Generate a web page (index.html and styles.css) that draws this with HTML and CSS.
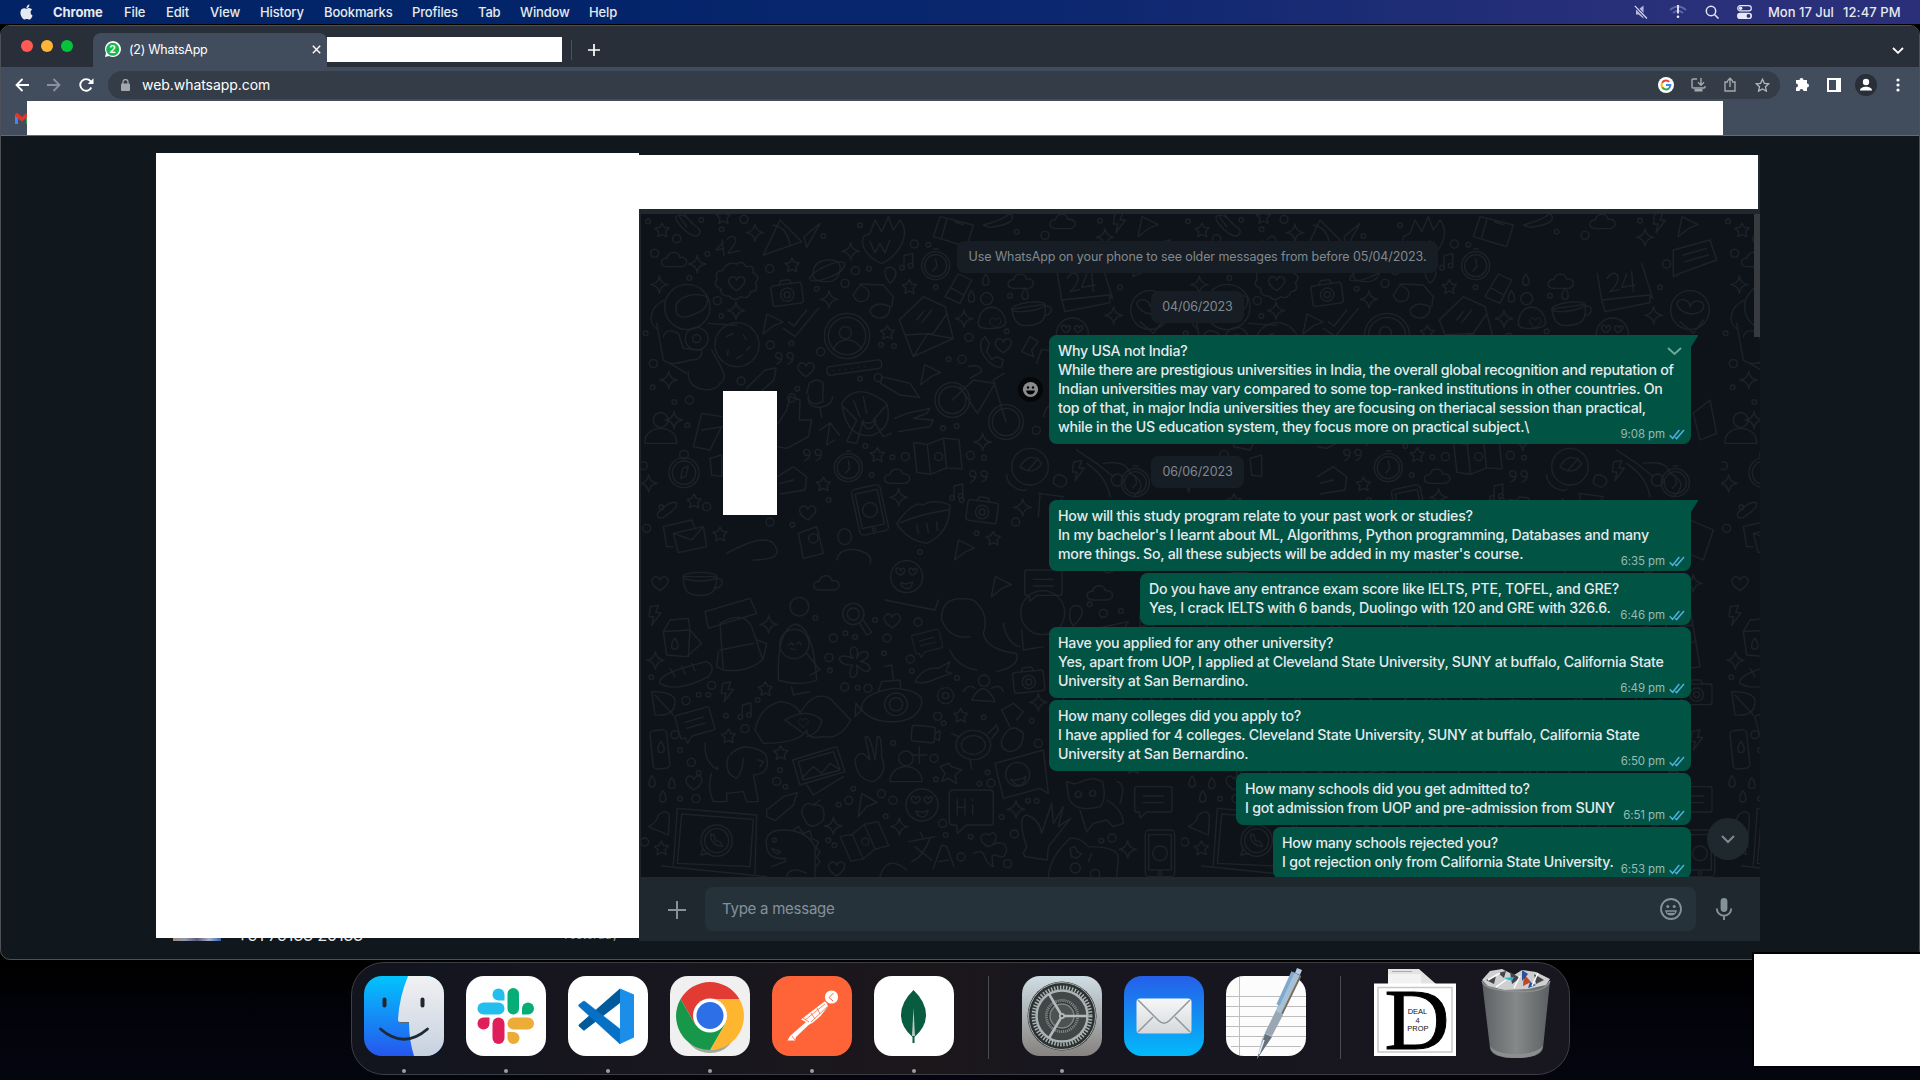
FILE: index.html
```html
<!DOCTYPE html>
<html lang="en">
<head>
<meta charset="utf-8">
<title>(2) WhatsApp</title>
<link rel="stylesheet" href="styles.css">
</head>
<body>
<svg class="defs" width="0" height="0">
  <defs>
    <symbol id="ticks" viewBox="0 0 16 11"><path d="M.7 6.200 3.600 9.300 10.300 1M6.200 8.200 7.600 9.600 15 1" fill="none" stroke="#4cb0dc" stroke-width="1.500"/></symbol>
    <g id="o"><circle r="7"/></g>
    <g id="O"><circle r="12"/></g>
    <g id="star"><path d="M0-21 7-8 21-6 11 5 14 20 0 13-13 20-10 5-21-5-7-8Z"/></g>
    <g id="spark"><path d="M0-26Q3-3 26 0 3 3 0 26-3 3-26 0-3-3 0-26Z"/></g>
    <g id="heart"><path d="M0 22C-22 8-30-6-20-16-12-24-2-18 0-10 4-20 14-24 21-16 30-6 20 8 0 22Z"/></g>
    <g id="cloud"><path d="M-22 20C-46 18-42-8-22-6-18-28 14-28 16-8 42-10 44 16 22 20Z"/></g>
    <g id="bolt"><path d="M-14-26 10-30 2-8 18-8-10 30-4 4-18 4Z"/></g>
    <g id="camera"><rect x="-46" y="-28" width="92" height="62" rx="8"/><path d="M-20-28-14-40 12-40 18-28"/><circle r="20" cy="4"/><circle r="9" cy="4"/></g>
    <g id="clock"><circle r="42"/><circle r="33"/><path d="M0-20 4 2-8 16M-6-50H8"/></g>
    <g id="drop"><path d="M0-18C16 4 10 16 0 16S-14 4 0-18Z"/></g>
    <g id="note"><path d="M-8 18V-18L18-24V12"/><circle cx="-14" cy="18" r="7"/><circle cx="12" cy="12" r="7"/></g>
    <g id="quote"><path d="M-26 14C-6 6-6-20-20-20S-32 0-14-2M8 14C28 6 28-20 14-20S2 0 20-2"/></g>
    <g id="chat"><path d="M-56-34Q-56-40-50-40H50Q56-40 56-34V30Q56 36 50 36H-20L-40 54-42 36H-50Q-56 36-56 30Z"/><path d="M-30-12H30M-30 8H30"/></g>
    <g id="map"><path d="M-70-50-30-40 20-54 66-44V44L20 36-30 50-70 40ZM-30-40V50M20-54V36"/><circle r="12"/></g>
    <g id="phone"><rect x="-44" y="-70" width="88" height="140" rx="12"/><rect x="-34" y="-56" width="68" height="106"/><circle r="22"/><circle cy="60" r="5"/></g>
    <g id="smile"><circle r="48"/><path d="M-26-8C-44-24-20-34-18-18-12-34 6-20-18-4ZM16-4C-4-20 14-34 20-18 26-34 44-18 16-4ZM-18 18Q0 26 18 16 14 38 0 36-14 34-18 18Z"/></g>
    <g id="person"><circle cy="-40" r="22"/><path d="M-48 30C-48-30 48-30 48 30Z"/></g>
    <g id="cup"><path d="M-50-20C-50 30-30 36 0 36S50 30 50-20Z"/><ellipse cy="-20" rx="50" ry="13"/><path d="M50-14C76-18 70 16 44 14"/></g>
    <g id="plane"><path d="M-26 30-14-30 34-6 8 4Z"/></g>
    <pattern id="doodles" width="540" height="663" patternUnits="userSpaceOnUse">
      <g transform="scale(.33333) translate(-3 -42)" fill="none" stroke="#1c2228" stroke-width="4" stroke-linejoin="round" stroke-linecap="round">
        <path d="M110 62C100 40 130 40 150 62S190 90 176 104 130 92 110 62ZM118 50 140 80M134 44 158 72"/>
        <path d="M250 125 228 150 252 146M246 120 252 166M262 118C280 96 300 120 276 142L264 160 300 152"/>
        <path d="M370 165 420 60 485 125Q430 145 370 165ZM400 75Q440 80 450 135M492 110 540 70 500 142Z"/>
        <path d="M670 110C655 160 720 190 725 190 760 180 820 110 780 60L760 90 745 50 725 95 705 60 690 100ZM690 125 705 158 720 130 735 158 750 120"/>
        <path d="M900 50 1000 75 980 140 880 110ZM920 60 905 112M945 66 970 74M1030 75Q1090 60 1110 40 1140 70 1050 82Z"/>
        <use href="#cloud" x="103" y="180"/><use href="#cloud" x="1268" y="66"/><use href="#cloud" x="1143" y="245"/><use href="#cloud" x="772" y="830"/>
        <use href="#star" x="66" y="90"/><use href="#star" x="456" y="195"/><use href="#star" x="742" y="397"/><use href="#star" x="808" y="260"/><use href="#star" x="712" y="764"/><use href="#star" x="550" y="852"/><use href="#star" x="162" y="903"/><use href="#star" x="240" y="1002"/><use href="#star" x="1060" y="1015"/><use href="#star" x="250" y="50"/>
        <use href="#spark" x="172" y="192"/><use href="#spark" x="58" y="254"/><use href="#spark" x="345" y="98"/><use href="#spark" x="632" y="154"/><use href="#spark" x="567" y="298"/><use href="#spark" x="288" y="332"/><use href="#spark" x="972" y="356"/><use href="#spark" x="86" y="540"/><use href="#spark" x="1028" y="726"/><use href="#spark" x="776" y="892"/><use href="#spark" x="1148" y="922"/><use href="#spark" x="26" y="850"/><use href="#spark" x="1421" y="346"/><use href="#spark" x="1395" y="112"/><use href="#spark" x="102" y="660"/>
        <path d="M290 192Q310 180 318 200 345 195 338 218 365 230 346 248 358 275 332 275 325 300 302 290 282 308 268 288 240 290 243 266 215 255 232 238 222 212 248 212 262 182 290 192Z"/><use href="#heart" x="290" y="250"/>
        <path d="M520 230Q515 185 560 180T600 210 560 245 520 230ZM510 240C500 215 620 165 614 195S530 250 510 240Z"/>
        <use href="#camera" transform="translate(441 280) rotate(-8)"/><use href="#camera" transform="translate(1027 932) rotate(8)"/>
        <circle cx="142" cy="321" r="68"/><path d="M110 340C95 290 160 275 200 290Q215 330 142 350 120 355 110 340ZM75 300C25 320 25 370 50 385M50 370 70 480Q90 500 150 480 190 480 185 450L130 445 115 400Q80 380 70 410M205 370 290 376M215 450C240 500 270 530 240 550 230 580 140 580 145 515M90 490 140 520"/><circle cx="170" cy="416" r="34"/><circle cx="170" cy="416" r="12"/>
        <circle cx="291" cy="434" r="66" stroke-dasharray="24 5"/><path d="M260 410 280 400M310 405 318 418M265 450 262 465M320 450 330 440M290 475 308 465"/>
        <use href="#plane" x="395" y="372"/><use href="#plane" x="868" y="524"/><path d="M430 385 465 410 535 325M445 365 462 378 500 330"/>
        <circle cx="621" cy="408" r="68"/><circle cx="621" cy="408" r="56"/><circle cx="616" cy="398" r="18"/><path d="M580 450C590 410 650 410 664 448"/>
        <path d="M640 285 660 255Q700 270 680 300 650 315 640 285ZM690 330Q710 300 750 320 750 350 720 355 690 350 690 330ZM660 252 730 255 760 290 755 320"/>
        <path d="M778 360 850 290 915 320 940 415 820 470ZM795 405 880 400 918 345M820 470 862 402 940 415M830 360 850 335M845 368 875 330"/>
        <use href="#clock" x="887" y="197"/><use href="#clock" x="625" y="803"/><use href="#note" x="800" y="185"/><use href="#note" x="950" y="876"/>
        <path d="M750 250C720 210 740 200 752 202 778 210 768 235 750 250ZM915 290 955 222 995 240 960 310ZM930 262 972 285"/>
        <use href="#drop" x="994" y="290"/><use href="#drop" x="1037" y="240"/><use href="#drop" x="1155" y="282"/><circle cx="1040" cy="296" r="18"/>
        <use href="#smile" x="1297" y="402"/><path d="M1015 375C1015 300 1095 310 1097 370 1090 390 1020 390 1015 375Z"/><use href="#heart" transform="translate(1066 368) scale(.7)"/>
        <use href="#cup" transform="translate(1168 340) rotate(-8)"/>
        <path d="M1252 220 1265 300 1408 285 1418 295 1385 190M1275 335 1410 308V290M1265 300 1275 335M1282 235C1300 200 1340 230 1290 275L1320 268M1340 222 1325 262 1365 255M1355 215 1360 275"/>
        <circle cx="1530" cy="330" r="58"/><path d="M1490 310C1500 290 1530 300 1530 320 1540 295 1570 300 1572 320 1565 350 1500 350 1490 310ZM1500 365 1540 400 1570 360"/><path d="M1480 150 1590 120 1610 180 1500 220 1480 230Z M1510 165 1580 145M1515 185 1585 165"/><use href="#plane" x="1520" y="80"/><use href="#bolt" x="1438" y="68"/>
        <use href="#quote" x="436" y="478"/><use href="#quote" x="520" y="768"/><use href="#quote" x="1018" y="832"/><use href="#heart" x="498" y="508"/><use href="#heart" x="1090" y="436"/><use href="#heart" x="503" y="938"/>
        <rect x="560" y="490" width="165" height="26" rx="10" transform="rotate(-8 640 500)"/><path d="M580 512 690 498" stroke-dasharray="1 18"/>
        <path d="M1025 420C1010 460 1060 510 1085 500L1090 480 1070 470 1055 478 1040 455 1048 430 1035 410ZM1145 455 1170 410 1195 425 1175 450 1180 470ZM1190 490 1205 448 1230 452"/>
        <path d="M320 565 375 510 408 504 402 540 345 590M725 530 810 550 838 592 780 585 722 550ZM500 580 508 550Q530 530 550 550L548 605Q520 620 508 600M505 585Q500 620 535 622 575 620 578 590M540 622 545 652"/>
        <circle cx="937" cy="600" r="52"/><circle cx="937" cy="600" r="41"/><circle cx="1098" cy="666" r="52"/><circle cx="1098" cy="666" r="41"/><path d="M937 600 1000 540 1065 550 1012 640 960 560M1098 666 1060 540 1092 520M985 500Q1020 490 1025 515L990 535"/>
        <path d="M605 610Q650 540 740 610 760 680 700 705 620 720 605 610ZM610 620 650 660 620 725 650 730 670 660M740 615 700 660 730 710 755 700M640 600 660 650M670 590 680 640M665 665Q690 675 708 660 700 690 680 685Z"/>
        <path d="M765 655 800 640 870 625 860 640 820 655 880 660 870 680 775 695M415 670 440 630 450 590 480 600 478 660 515 660 505 710 440 745 412 740M540 690 570 668 598 705M570 668 560 735 585 720"/>
        <use href="#person" x="62" y="700"/><path d="M160 740 185 640 245 650M185 690 250 680M160 740 210 750 245 680"/>
        <circle cx="132" cy="818" r="45"/><circle cx="132" cy="818" r="35"/><circle cx="132" cy="764" r="13"/><path d="M122 835 128 805 145 798 138 828Z"/>
        <use href="#map" transform="translate(896 770) rotate(-6)"/><circle cx="1170" cy="800" r="55"/><path d="M1100 825C1100 860 1150 880 1160 868M1140 800Q1170 750 1205 790 1180 830 1140 800ZM1165 810 1195 775"/>
        <path d="M1310 750 1370 790 1420 830M1390 790Q1460 780 1470 820 1530 850 1480 890M1340 790Q1400 830 1410 890"/><circle cx="1432" cy="840" r="18"/><use href="#bolt" x="1315" y="812"/><path d="M1240 850Q1240 820 1262 825 1290 835 1275 855 1265 870 1240 850ZM1195 880 1270 890M1200 885 1195 950M1265 895 1262 920"/><use href="#clock" x="1486" y="848"/>
        <path d="M412 830 460 800 500 830 495 870 420 882M420 850 460 840M210 775 245 765 245 830 215 825ZM52 940Q90 900 108 908 120 920 70 952 50 960 52 940Z"/>
        <use href="#phone" transform="translate(690 930) rotate(-12)"/><path d="M770 970Q820 900 850 915 880 895 930 915 930 1000 860 1030 800 1020 770 970ZM780 968Q850 940 925 930M830 975 835 1000M860 970 865 998M890 965 892 992"/>
        <path d="M70 980 155 960 165 985M70 980 80 1040 100 1040M100 1000 190 980 200 1040 115 1058ZM100 1000 155 1020 190 980M475 1000 530 980 550 1060 490 1075ZM590 1080Q600 1040 650 1050 700 1060 690 1090M260 1060Q370 1000 400 1030 440 1080 340 1080"/>
        <circle cx="520" cy="1015" r="14"/><ellipse cx="614" cy="1010" rx="20" ry="24"/><use href="#plane" x="970" y="1050"/><path d="M1350 1060Q1400 980 1450 1040 1500 1090 1400 1120ZM1530 960 1600 990 1570 1080 1500 1050ZM1540 640 1590 600 1610 700 1560 720ZM1210 650Q1220 600 1260 620"/>
        <use href="#bolt" x="45" y="1246"/><path d="M70 1295 90 1260 145 1255 150 1290 185 1330 140 1370 80 1365ZM70 1295 150 1290 145 1370"/><use href="#drop" x="104" y="1332"/><use href="#spark" x="386" y="1273"/><use href="#spark" x="46" y="1381"/>
        <path d="M195 1235 330 1195 350 1240 205 1285ZM240 1270Q310 1230 335 1280L368 1380Q320 1420 250 1410ZM240 1350 340 1330M235 1355 230 1400 250 1410M350 1320 380 1330 370 1375"/>
        <path d="M60 1450Q50 1420 200 1385 230 1400 205 1430 110 1480 60 1450ZM90 1405 105 1430M125 1398 135 1422M155 1390 165 1412"/>
        <path d="M415 1440Q410 1290 465 1272 520 1280 530 1440 480 1460 415 1440ZM455 1460 460 1485 510 1475M500 1360 540 1410 510 1425"/><circle cx="463" cy="1332" r="44"/><path d="M445 1335 455 1328 460 1335M470 1332 478 1326 484 1334M452 1345 465 1350"/>
        <circle cx="478" cy="1220" r="28"/><circle cx="640" cy="1242" r="32"/><circle cx="640" cy="1242" r="18"/><path d="M660 1270 680 1305 695 1298 670 1260M735 1200 885 1230 895 1200"/><use href="#heart" x="757" y="1262"/>
        <path d="M640 1375C610 1340 665 1320 650 1375 670 1330 710 1370 660 1385 710 1390 690 1440 650 1395 660 1450 610 1440 638 1395 590 1400 580 1350 640 1375Z"/>
        <use href="#chat" transform="translate(862 1326) rotate(-14) scale(.75)"/><path d="M825 1445Q850 1400 895 1405L930 1385 918 1415 935 1420 890 1435Q850 1455 825 1445ZM735 1400 755 1395 760 1440M665 1530Q660 1480 760 1465 850 1470 845 1510 830 1570 740 1565 690 1560 665 1530ZM715 1475 725 1445 780 1440 782 1466M665 1530 648 1510 645 1550Z"/><circle cx="768" cy="1513" r="34"/><circle cx="768" cy="1513" r="20"/>
        <path d="M905 1260Q900 1180 1000 1200 1050 1240 1030 1300 1040 1350 1130 1360 1140 1400 1070 1415M905 1260Q930 1320 990 1310M930 1350Q950 1400 1010 1410M1090 1270Q1100 1330 1140 1340"/><circle cx="1208" cy="1238" r="66"/><path d="M1145 1290 1150 1350 1210 1340"/><use href="#camera" transform="translate(1166 1442) rotate(-6)"/>
        <path d="M1290 1230Q1300 1210 1320 1220 1340 1240 1300 1278 1285 1260 1290 1230ZM1370 1285 1465 1265 1440 1310M1500 1240 1530 1225 1560 1400 1500 1410ZM1500 1280 1540 1275M1505 1330 1550 1325"/>
        <path d="M995 1500Q1030 1430 1065 1505ZM970 1475Q985 1450 1005 1465M1055 1465Q1080 1450 1090 1475"/><circle cx="1032" cy="1442" r="17"/><circle cx="917" cy="1487" r="24" stroke-dasharray="9 5"/><circle cx="917" cy="1487" r="9"/>
        <path d="M35 1475Q110 1475 105 1510 100 1550 45 1545ZM45 1485 100 1545"/><use href="#bolt" x="262" y="1476"/><use href="#star" x="376" y="1466"/><use href="#note" x="315" y="1533"/><use href="#star" x="265" y="1608"/><use href="#star" x="422" y="1658"/><use href="#star" x="962" y="1546"/><use href="#spark" x="1195" y="1507"/>
        <use href="#chat" transform="translate(165 1570) rotate(-16) scale(.95)"/><path d="M345 1590Q360 1520 420 1505 470 1510 480 1540 520 1470 570 1495L632 1560Q600 1620 550 1610 500 1620 500 1590 480 1630 370 1630ZM435 1560Q500 1520 545 1560 540 1600 500 1610M435 1560 490 1600"/><use href="#heart" transform="translate(490 1568) scale(.6)"/>
        <rect x="35" y="1590" width="50" height="116" rx="12" transform="rotate(-6 60 1650)"/><use href="#drop" x="63" y="1642"/>
        <path d="M195 1630C190 1700 250 1720 230 1700M270 1665Q310 1620 375 1660 400 1720 340 1725L355 1805 320 1805 310 1775 260 1780 260 1805 220 1805Q200 1760 215 1720M265 1670Q250 1720 290 1735 310 1710 310 1675M355 1680 372 1685 360 1700"/>
        <path d="M458 1680 590 1640 615 1715 480 1755ZM475 1685 580 1655 600 1710 490 1740ZM485 1735 520 1700 545 1720 570 1690 600 1710M500 1755 520 1785 610 1730"/>
        <path d="M645 1680Q660 1640 690 1680L675 1610Q690 1600 705 1680L712 1610Q725 1600 725 1670 745 1720 700 1745 650 1740 645 1680Z"/><use href="#person" x="798" y="1715"/><rect x="815" y="1578" width="70" height="48" rx="8" transform="rotate(5 850 1600)"/><path d="M885 1600 900 1592 898 1622 885 1615M838 1640V1690M815 1665H860"/>
        <ellipse cx="1000" cy="1635" rx="52" ry="44"/><ellipse cx="1000" cy="1635" rx="36" ry="28" stroke-dasharray="18 5"/><path d="M1045 1600 1070 1575 1075 1590 1055 1615M990 1680 995 1705M935 1600 955 1610M1085 1620Q1110 1560 1150 1600 1150 1650 1110 1655 1080 1650 1085 1620ZM1110 1580 1085 1530 1120 1510 1150 1535 1130 1560"/>
        <path d="M1065 1690 1210 1650 1225 1780 1200 1765 1090 1795ZM900 1700 925 1690 935 1700 965 1710 945 1725 950 1750 925 1735 905 1745 915 1720Z"/><circle cx="1133" cy="1723" r="36"/><path d="M1110 1738Q1130 1745 1158 1730 1150 1762 1130 1755Z"/>
        <use href="#drop" x="36" y="1745"/><use href="#drop" x="95" y="1750"/><use href="#drop" x="68" y="1790"/><use href="#heart" x="162" y="1748"/><use href="#heart" x="590" y="2006"/><use href="#smile" x="846" y="1815"/>
        <path d="M380 1830 430 1790 472 1778 460 1815 405 1862 380 1850ZM485 1840Q490 1800 520 1815 560 1810 550 1860 520 1890 500 1870ZM520 1815 540 1800M655 1850 665 1780 712 1808 680 1820ZM928 1780Q930 1770 940 1770H1050Q1060 1770 1060 1780V1865Q1060 1875 1050 1875H980L952 1900 950 1875H940Q928 1875 928 1865ZM952 1798V1844M975 1798V1844M952 1822H975M998 1815V1844M998 1798V1802"/>
        <path d="M1280 1745 1305 1752Q1330 1740 1360 1735L1388 1745Q1400 1800 1380 1820 1300 1840 1285 1790ZM1320 1830 1340 1895 1360 1870 1400 1860 1420 1880 1450 1870Q1450 1830 1400 1800M1430 1745Q1460 1750 1440 1810"/><circle cx="1315" cy="1783" r="9"/><circle cx="1358" cy="1780" r="9"/>
        <path d="M25 1880Q50 1870 55 1845 90 1820 88 1860L85 1905ZM100 1995 112 1825 350 1845 345 2020M112 1990 125 1842 340 1858 330 2000ZM65 1998 380 2030"/><circle cx="230" cy="1922" r="47"/><circle cx="230" cy="1922" r="36"/><path d="M212 1902Q210 1935 248 1940L240 1925 226 1922 222 1905ZM190 1945 182 1965 208 1960"/><use href="#star" x="64" y="1944"/>
        <path d="M380 1940Q370 1890 430 1890 500 1890 525 1940L525 2030M440 2030Q450 1995 500 2020M395 2000 435 1985 437 1975Q385 1980 380 1940M395 1945 422 1955Q410 1970 395 1945ZM460 1890 475 1880 490 1900 510 1892 515 1915 535 1925 528 1945 540 1955 530 1972 540 1985 528 2000"/><circle cx="403" cy="1920" r="6"/>
        <use href="#map" transform="translate(676 1925) rotate(-24) scale(.9)"/><use href="#spark" x="580" y="1878"/><use href="#spark" x="778" y="1880"/><use href="#spark" x="1128" y="1828"/><use href="#spark" x="1463" y="1948"/>
        <path d="M806 1925 885 1910M840 1895 848 1912M870 1915Q850 1970 815 1985M825 1940 875 1980M880 2005 905 1935 920 1940 942 2000M895 1985 925 1980M720 2030Q740 1960 800 2010"/>
        <path d="M1047 1940C1010 1930 1020 1890 1047 1905 1070 1880 1080 1930 1047 1940 1100 1910 1110 1950 1090 1970 1070 1975 1047 1940 1060 2000 1020 1985 1047 1940 1000 1960 1000 1910 1047 1940M1040 1955 1005 1985"/>
        <path d="M1150 1960 1160 1940Q1130 1850 1160 1845 1200 1860 1205 1900L1235 1810 1240 1870 1270 1820 1255 1880 1292 1855 1225 1940 1222 1980 1155 1970ZM1225 2030Q1230 1970 1290 1915 1320 1910 1345 1940 1430 1940 1435 1970L1430 2030"/><circle cx="1306" cy="2004" r="15"/><circle cx="1365" cy="2022" r="14"/><path d="M1290 1945 1305 1940 1312 1955 1325 1962 1310 1975 1295 1970ZM1345 1985 1355 1960"/>
        <use href="#camera" x="1550" y="1480"/><use href="#chat" x="1540" y="1800"/><use href="#bolt" x="1550" y="1620"/><use href="#star" x="1480" y="1700"/><use href="#cloud" x="1380" y="1180"/><use href="#clock" x="1440" y="1550"/><use href="#cup" x="1320" y="1500"/><use href="#person" x="1360" y="1660"/><use href="#spark" x="1540" y="1150"/><use href="#phone" x="1560" y="1960"/><use href="#chat" x="1210" y="1150"/><use href="#cup" x="180" y="1150"/><use href="#smile" x="800" y="1130"/><use href="#cloud" x="560" y="1150"/><use href="#heart" x="60" y="1150"/><use href="#plane" x="1080" y="1160"/>
        <use href="#o" x="24" y="64"/><use href="#O" x="110" y="116"/><use href="#o" x="184" y="60"/><use href="#o" x="245" y="88"/><use href="#O" x="312" y="58"/><use href="#O" x="44" y="160"/><use href="#o" x="148" y="234"/><use href="#o" x="202" y="162"/><use href="#O" x="389" y="206"/><use href="#o" x="550" y="108"/><use href="#O" x="646" y="212"/><use href="#o" x="687" y="206"/><use href="#o" x="660" y="76"/><use href="#O" x="823" y="132"/><use href="#o" x="865" y="134"/><use href="#o" x="1130" y="95"/><use href="#O" x="1215" y="106"/><use href="#O" x="615" y="250"/><use href="#o" x="530" y="266"/><use href="#O" x="232" y="302"/><use href="#o" x="244" y="348"/><use href="#O" x="391" y="435"/><use href="#o" x="454" y="430"/><use href="#o" x="17" y="400"/><use href="#O" x="40" y="491"/><use href="#o" x="38" y="562"/><use href="#O" x="303" y="543"/><use href="#O" x="987" y="412"/><use href="#o" x="723" y="434"/><use href="#o" x="762" y="438"/><use href="#O" x="542" y="455"/><use href="#o" x="1110" y="287"/><use href="#o" x="887" y="262"/><use href="#o" x="1100" y="394"/><use href="#o" x="926" y="478"/><use href="#O" x="966" y="478"/><use href="#O" x="715" y="533"/><use href="#o" x="660" y="536"/><use href="#O" x="455" y="594"/><use href="#o" x="472" y="566"/><use href="#O" x="148" y="600"/><use href="#o" x="103" y="606"/><use href="#o" x="142" y="676"/><use href="#o" x="950" y="678"/><use href="#o" x="909" y="685"/><use href="#O" x="796" y="770"/><use href="#o" x="757" y="772"/><use href="#O" x="991" y="766"/><use href="#o" x="1032" y="773"/><use href="#o" x="676" y="738"/><use href="#O" x="1189" y="691"/><use href="#o" x="695" y="825"/><use href="#o" x="64" y="922"/><use href="#O" x="200" y="920"/><use href="#O" x="390" y="966"/><use href="#o" x="457" y="974"/><use href="#o" x="566" y="900"/><use href="#o" x="965" y="900"/><use href="#O" x="1127" y="966"/><use href="#o" x="1010" y="1000"/><use href="#o" x="840" y="1056"/><use href="#O" x="20" y="985"/><use href="#O" x="10" y="797"/><use href="#o" x="1440" y="262"/><use href="#O" x="1460" y="192"/><use href="#o" x="1380" y="62"/>
        <use href="#O" x="580" y="1314"/><use href="#o" x="616" y="1300"/><use href="#o" x="645" y="1311"/><use href="#O" x="741" y="1314"/><use href="#O" x="567" y="1373"/><use href="#o" x="526" y="1254"/><use href="#o" x="705" y="1260"/><use href="#O" x="834" y="1266"/><use href="#O" x="811" y="1377"/><use href="#o" x="732" y="1360"/><use href="#o" x="570" y="1411"/><use href="#O" x="614" y="1461"/><use href="#o" x="653" y="1463"/><use href="#O" x="684" y="1465"/><use href="#o" x="815" y="1413"/><use href="#o" x="34" y="1432"/><use href="#O" x="215" y="1456"/><use href="#o" x="205" y="1484"/><use href="#o" x="176" y="1484"/><use href="#O" x="138" y="1502"/><use href="#o" x="353" y="1500"/><use href="#O" x="315" y="1586"/><use href="#o" x="258" y="1547"/><use href="#O" x="105" y="1604"/><use href="#o" x="120" y="1650"/><use href="#O" x="154" y="1687"/><use href="#o" x="176" y="1719"/><use href="#o" x="951" y="1434"/><use href="#O" x="893" y="1549"/><use href="#o" x="911" y="1570"/><use href="#o" x="1031" y="1552"/><use href="#O" x="1195" y="1630"/><use href="#o" x="1175" y="1562"/><use href="#O" x="882" y="1675"/><use href="#o" x="759" y="1629"/><use href="#O" x="410" y="1744"/><use href="#o" x="436" y="1760"/><use href="#o" x="420" y="1710"/><use href="#o" x="640" y="1766"/><use href="#O" x="724" y="1781"/><use href="#O" x="626" y="1801"/><use href="#o" x="596" y="1814"/><use href="#O" x="759" y="1801"/><use href="#o" x="737" y="1849"/><use href="#O" x="1053" y="1749"/><use href="#o" x="1018" y="1751"/><use href="#o" x="1043" y="1717"/><use href="#o" x="888" y="1738"/><use href="#O" x="908" y="1870"/><use href="#o" x="1085" y="1851"/><use href="#O" x="1123" y="1902"/><use href="#o" x="1164" y="1802"/><use href="#o" x="1190" y="1803"/><use href="#O" x="963" y="1971"/><use href="#o" x="917" y="1905"/><use href="#o" x="992" y="1910"/><use href="#O" x="1103" y="1991"/><use href="#o" x="120" y="1796"/><use href="#O" x="168" y="1796"/><use href="#o" x="565" y="1921"/><use href="#o" x="583" y="1936"/><use href="#O" x="1416" y="1914"/><use href="#o" x="1384" y="1922"/><use href="#O" x="14" y="1926"/><use href="#O" x="1390" y="1240"/><use href="#o" x="1349" y="1213"/><use href="#o" x="1443" y="1233"/>
      </g>
    </pattern>
  </defs>
</svg>

<header class="menubar">
  <svg class="apple" viewBox="0 0 24 24"><path fill="#e6e9f2" d="M12.152 6.896c-.948 0-2.415-1.078-3.96-1.04-2.04.027-3.91 1.183-4.961 3.014-2.117 3.675-.546 9.103 1.519 12.09 1.013 1.454 2.208 3.09 3.792 3.039 1.52-.065 2.09-.987 3.935-.987 1.831 0 2.35.987 3.96.948 1.637-.026 2.676-1.48 3.676-2.948 1.156-1.688 1.636-3.325 1.662-3.415-.039-.013-3.182-1.221-3.22-4.857-.026-3.04 2.48-4.494 2.597-4.559-1.429-2.09-3.623-2.324-4.39-2.376-2-.156-3.675 1.09-4.61 1.09zM15.53 3.83c.843-1.012 1.4-2.427 1.245-3.83-1.207.052-2.662.805-3.532 1.818-.78.896-1.454 2.338-1.273 3.714 1.338.104 2.715-.688 3.559-1.701"/></svg>
  <nav class="menus"><b>Chrome</b><span>File</span><span>Edit</span><span>View</span><span>History</span><span>Bookmarks</span><span>Profiles</span><span>Tab</span><span>Window</span><span>Help</span></nav>
  <div class="status">
    <svg width="14" height="14" viewBox="0 0 14 14"><path d="M2 4.500h2.500L9.500.5v13L4.500 9.500H2Z" fill="#b4bbdf"/><path d="M.8.8 13 13.500" stroke="#29307a" stroke-width="3"/><path d="M.8.8 13 13.500" stroke="#dfe2f0" stroke-width="1.100"/></svg>
    <svg width="18" height="14" viewBox="0 0 18 14"><path d="M1 5Q9-2 17 5M4 8Q9 3.500 14 8" fill="none" stroke="#5f68a5" stroke-width="1.800"/><path d="M9 0v8.500" stroke="#eef" stroke-width="1.800"/><circle cx="9" cy="11.800" r="1.300" fill="#eef"/></svg>
    <svg width="14" height="14" viewBox="0 0 14 14" fill="none" stroke="#e6e8f4" stroke-width="1.500"><circle cx="6" cy="6" r="4.700"/><path d="m9.500 9.500 4 4"/></svg>
    <svg width="15" height="14" viewBox="0 0 15 14"><rect x=".7" y=".7" width="13.600" height="5.200" rx="2.600" fill="none" stroke="#e6e8f4" stroke-width="1.200"/><circle cx="3.600" cy="3.300" r="1.800" fill="#e6e8f4"/><rect y="7.800" width="15" height="6.200" rx="3.100" fill="#e6e8f4"/><circle cx="11.500" cy="10.900" r="1.900" fill="#29307a"/></svg>
    <span class="date">Mon 17 Jul</span><span class="time">12:47 PM</span>
  </div>
</header>

<main class="window">
  <div class="tabstrip">
    <div class="lights"><i class="red"></i><i class="amber"></i><i class="green"></i></div>
    <div class="tab">
      <svg width="17" height="17" viewBox="0 0 17 17"><path d="M1 16 2 12A8 8 0 1 1 5 15Z" fill="#fff"/><circle cx="8.700" cy="8.300" r="6.500" fill="#17b94c"/><text x="8.600" y="12.200" text-anchor="middle" class="badge">2</text></svg>
      <span class="tabtitle">(2) WhatsApp</span>
      <svg class="close" width="9" height="9" viewBox="0 0 9 9"><path d="m.8.8 7.400 7.400m0-7.400L.8 8.200" stroke="#fff" stroke-width="1.400"/></svg>
    </div>
    <div class="tabcover"></div>
    <div class="tabsep"></div>
    <svg class="plus" width="12" height="12" viewBox="0 0 12 12"><path d="M6 0v12M0 6h12" stroke="#fff" stroke-width="1.700"/></svg>
    <svg class="chev" width="12" height="7" viewBox="0 0 12 7"><path d="m1 1 5 4.800L11 1" fill="none" stroke="#fff" stroke-width="1.800"/></svg>
  </div>
  <div class="toolbar">
    <svg width="14" height="14" viewBox="0 0 14 14"><path d="M14 7H1.500M7.500 1 1.500 7l6 6" fill="none" stroke="#fff" stroke-width="1.800"/></svg>
    <svg width="14" height="14" viewBox="0 0 14 14"><path d="M0 7h12.500M6.500 1l6 6-6 6" fill="none" stroke="#8a919d" stroke-width="1.800"/></svg>
    <svg width="15" height="14" viewBox="0 0 15 14"><path d="M12.300 9.500A5.800 5.800 0 1 1 11.500 3.200L13.300 5" fill="none" stroke="#fff" stroke-width="1.900"/><path d="M14.500.2V6H8.700Z" fill="#fff"/></svg>
    <div class="omnibox">
      <svg width="9" height="12" viewBox="0 0 9 12"><rect y="4.500" width="9" height="7.500" rx="1" fill="#a3a8ae"/><path d="M2 5V3a2.500 2.500 0 0 1 5 0v2" fill="none" stroke="#a3a8ae" stroke-width="1.300"/></svg>
      <span class="url">web.whatsapp.com</span>
      <div class="pageicons">
        <svg width="16" height="16" viewBox="0 0 16 16"><circle cx="8" cy="8" r="8" fill="#fff"/><g fill="none" stroke-width="2"><path d="M4.200 5.700A4.400 4.400 0 0 1 11.200 4.900" stroke="#ea4335"/><path d="M4.200 5.700a4.400 4.400 0 0 0 0 4.600" stroke="#fbbc05"/><path d="M4.200 10.300a4.400 4.400 0 0 0 6.800.9" stroke="#34a853"/><path d="M11 11.200A4.400 4.400 0 0 0 12.400 8H8" stroke="#4285f4"/></g></svg>
        <svg width="15" height="14" viewBox="0 0 15 14"><path d="M6 1H2Q1 1 1 2V9Q1 10 2 10H13Q14 10 14 9V8" fill="none" stroke="#a5a9ae" stroke-width="1.400"/><path d="M3.500 11H11.500V13.500H3.500Z" fill="#a5a9ae"/><path d="M10 0V7M7 4.300l3 3 3-3" fill="none" stroke="#a5a9ae" stroke-width="1.400"/></svg>
        <svg width="12" height="15" viewBox="0 0 12 15"><path d="M4 5H1v9h10V5H8M6 10V1.500M3.300 4 6 1.300 8.700 4" fill="none" stroke="#a5a9ae" stroke-width="1.400"/></svg>
        <svg width="15" height="14" viewBox="0 0 15 14"><path d="m7.500 1.300 1.900 4 4.300.5-3.200 3 .9 4.300-3.900-2.200-3.900 2.200.9-4.300-3.200-3 4.300-.5Z" fill="none" stroke="#b4b8bc" stroke-width="1.300"/></svg>
      </div>
    </div>
    <div class="actions">
      <svg width="15" height="15" viewBox="0 0 15 15"><path d="M1 3h3.500a2 2 0 1 1 4 0H12v3.500a2 2 0 1 1 0 4V14H8.500a2 2 0 1 0-4 0H1v-3.500a2 2 0 1 0 0-4Z" fill="#fff"/></svg>
      <svg width="14" height="14" viewBox="0 0 14 14"><path d="M0 0H14V14H0ZM2 2V12H9V2Z" fill="#fff" fill-rule="evenodd"/></svg>
      <svg width="22" height="22" viewBox="0 0 22 22"><circle cx="11" cy="11" r="11" fill="#292e37"/><circle cx="11" cy="8" r="3.200" fill="#fff"/><path d="M5 16.500c0-5 12-5 12 0Z" fill="#fff"/></svg>
      <svg width="4" height="14" viewBox="0 0 4 14" fill="#fff"><circle cx="2" cy="2" r="1.600"/><circle cx="2" cy="7" r="1.600"/><circle cx="2" cy="12" r="1.600"/></svg>
    </div>
  </div>
  <div class="bookmarks">
    <svg width="15" height="11" viewBox="0 0 15 11"><path d="M0 2h3v9H0Z" fill="#4285f4"/><path d="M11 2h3v9h-3Z" fill="#34a853"/><path d="M0 1.500Q1.500-1 3.500 1L7 4l3.500-3Q12.500-1 14 1.500V3L7 8.500 0 3Z" fill="#e5342b"/></svg>
    <div class="bookcover"></div>
  </div>

  <div class="page">
    <aside class="sidebar">
      <div class="cover"></div>
      <div class="peek"><i class="avatar"></i><span class="num">+91 79133 20133</span><span class="day">Yesterday</span></div>
    </aside>
    <section class="chat">
      <div class="chathead"></div>
      <div class="thread">
        <svg class="wall" width="1119" height="663"><rect width="1119" height="663" fill="url(#doodles)"/></svg>
        <div class="leftblank"></div>
        <div class="scroll"></div>
        <div class="flow">
          <div class="chip notice">Use WhatsApp on your phone to see older messages from before 05/04/2023.</div>
          <div class="chip first">04/06/2023</div>
          <div class="row tail">
            <svg class="react" width="25" height="25" viewBox="0 0 25 25"><circle cx="12.500" cy="12.500" r="12.500" fill="#050709"/><circle cx="12.500" cy="12.500" r="7.600" fill="#8a8c8e"/><circle cx="10" cy="10.500" r="1.200"/><circle cx="15" cy="10.500" r="1.200"/><path d="M8 13.500h9q-1 4-4.500 4t-4.500-4Z"/></svg>
            <div class="bubble w1">Why USA not India?<br>While there are prestigious universities in India, the overall global recognition and reputation of<br>Indian universities may vary compared to some top-ranked institutions in other countries. On<br>top of that, in major India universities they are focusing on theriacal session than practical,<br>while in the US education system, they focus more on practical subject.\
              <svg class="more" width="15" height="9" viewBox="0 0 15 9"><path d="m1 1 6.500 6L14 1" fill="none" stroke="#74a69b" stroke-width="2"/></svg>
              <span class="meta">9:08 pm <svg width="16" height="11"><use href="#ticks"/></svg></span></div>
          </div>
          <div class="chip second">06/06/2023</div>
          <div class="row tail"><div class="bubble w1">How will this study program relate to your past work or studies?<br>In my bachelor's I learnt about ML, Algorithms, Python programming, Databases and many<br>more things. So, all these subjects will be added in my master's course.<span class="meta">6:35 pm <svg width="16" height="11"><use href="#ticks"/></svg></span></div></div>
          <div class="row"><div class="bubble w2">Do you have any entrance exam score like IELTS, PTE, TOFEL, and GRE?<br>Yes, I crack IELTS with 6 bands, Duolingo with 120 and GRE with 326.6.<span class="meta">6:46 pm <svg width="16" height="11"><use href="#ticks"/></svg></span></div></div>
          <div class="row"><div class="bubble w1">Have you applied for any other university?<br>Yes, apart from UOP, I applied at Cleveland State University, SUNY at buffalo, California State<br>University at San Bernardino.<span class="meta">6:49 pm <svg width="16" height="11"><use href="#ticks"/></svg></span></div></div>
          <div class="row"><div class="bubble w1">How many colleges did you apply to?<br>I have applied for 4 colleges. Cleveland State University, SUNY at buffalo, California State<br>University at San Bernardino.<span class="meta">6:50 pm <svg width="16" height="11"><use href="#ticks"/></svg></span></div></div>
          <div class="row"><div class="bubble w3">How many schools did you get admitted to?<br>I got admission from UOP and pre-admission from SUNY<span class="meta">6:51 pm <svg width="16" height="11"><use href="#ticks"/></svg></span></div></div>
          <div class="row"><div class="bubble w4">How many schools rejected you?<br>I got rejection only from California State University.<span class="meta">6:53 pm <svg width="16" height="11"><use href="#ticks"/></svg></span></div></div>
        </div>
        <div class="jump"><svg width="14" height="9" viewBox="0 0 14 9"><path d="m1 1 6 6 6-6" fill="none" stroke="#83888c" stroke-width="2"/></svg></div>
      </div>
      <footer class="composer">
        <svg class="attach" width="18" height="18" viewBox="0 0 18 18"><path d="M9 0v18M0 9h18" stroke="#85929a" stroke-width="2"/></svg>
        <div class="input"><span>Type a message</span>
          <svg width="24" height="24" viewBox="0 0 24 24"><circle cx="12" cy="12" r="10" fill="none" stroke="#85929a" stroke-width="1.800"/><circle cx="8.800" cy="9.500" r="1.500" fill="#85929a"/><circle cx="15.200" cy="9.500" r="1.500" fill="#85929a"/><path d="M6 13.300h12q-1.200 5.200-6 5.200t-6-5.200Z" fill="#85929a"/><path d="M8 15.300h8" stroke="#26323a" stroke-width="1.100"/></svg></div>
        <svg width="18" height="24" viewBox="0 0 18 24"><rect x="5.600" y="1" width="6.800" height="14" rx="3.400" fill="#85929a"/><path d="M1.800 11.500a7.200 7.200 0 0 0 14.400 0M9 18.500V23" fill="none" stroke="#85929a" stroke-width="1.900"/></svg>
      </footer>
    </section>
  </div>
</main>

<div class="dock">
  <div class="app open"><svg viewBox="0 0 80 80"><defs><linearGradient id="fb" x2="0" y2="1"><stop stop-color="#02c3fd"/><stop offset="1" stop-color="#2657ee"/></linearGradient><linearGradient id="fw" x2="0" y2="1"><stop stop-color="#f1f1f3"/><stop offset="1" stop-color="#c6d1df"/></linearGradient><clipPath id="sq"><rect width="80" height="80" rx="18"/></clipPath></defs><g clip-path="url(#sq)"><path d="M0 0H80V80H0Z" fill="url(#fb)"/><path d="M44 0Q35 22 34 44 34 46 36 46H45Q45 64 50 80H80V0Z" fill="url(#fw)"/></g><path d="M20.500 23.500v6M58.500 23.500v6" stroke="#222529" stroke-width="4" stroke-linecap="round"/><path d="M16.500 53Q40 73.500 63.500 53" fill="none" stroke="#1e2936" stroke-width="2.800" stroke-linecap="round"/><path d="M36 46.500H45" stroke="#5b6470" stroke-width="1"/></svg></div>
  <div class="app open"><svg viewBox="0 0 80 80"><rect width="80" height="80" rx="18" fill="#fff"/><g fill="#23bdee"><rect x="11.500" y="26.500" width="27" height="12" rx="6"/><path d="M38.500 24.500h-6a6 6 0 1 1 6-6Z"/></g><g fill="#06ae77"><rect x="41.500" y="12" width="11.500" height="26.500" rx="5.700"/><path d="M56 38.500v-6a6 6 0 1 1 6 6Z"/></g><g fill="#e01e5a"><rect x="26.500" y="41.500" width="12" height="26.500" rx="6"/><path d="M23.500 41.500v6a6 6 0 1 1-6-6Z"/></g><g fill="#ebad37"><rect x="41.500" y="41.500" width="26.500" height="12" rx="6"/><path d="M41.500 56h6a6 6 0 1 1-6 6Z"/></g></svg></div>
  <div class="app open"><svg viewBox="0 0 80 80"><rect width="80" height="80" rx="18" fill="#fff"/><path d="M52 12.500V27L17 54q-1 1-2 0l-4-3.500q-1-1 0-2Z" fill="#015a9c"/><path d="M11 30.500q-1-1 0-2l4-3q1-1 2 0L52 53V68Z" fill="#0670c5" stroke="#0670c5" stroke-width=".5"/><path d="M52 12.500 66 18.500V61.500L52 68Z" fill="#1b8eea"/></svg></div>
  <div class="app open"><svg viewBox="0 0 80 80"><rect width="80" height="80" rx="18" fill="#f0f0f0"/><path d="M12 50Q40 98 68 50 62 77 40 77T12 50Z" fill="#9fa99c"/><path d="M10.600 23A34 34 0 0 1 69.400 23H40V40L25.300 48.500Z" fill="#e23b33"/><path d="M69.400 23A34 34 0 0 1 40 74L54.700 48.500 40 40V23Z" fill="#feb630"/><path d="M40 74A34 34 0 0 1 10.600 23L25.300 48.500 40 40 54.700 48.500Z" fill="#16974a"/><circle cx="40" cy="39.500" r="17" fill="#fff"/><circle cx="40" cy="39.500" r="13.500" fill="#2d6fe6"/></svg></div>
  <div class="app open"><svg viewBox="0 0 80 80"><rect width="80" height="80" rx="18" fill="#ff6439"/><circle cx="59.500" cy="21" r="6.600" fill="#fff"/><path d="m61.500 17-4.500 4.500 4 3.500" fill="none" stroke="#ff6439" stroke-width="1"/><path d="M52.500 25.500Q56 27 55.500 31L48.500 40 41 46.500 36.500 49 24 61 23 64.500H15.500L18 60 34 46 29 43.500Z" fill="#fff"/><path d="M53 28 33 44M55 31 39 46M31 42l6 4M20 60l3 4M45 32l3 6M39 37l4 6" stroke="#ff6439" stroke-width=".8"/></svg></div>
  <div class="app open"><svg viewBox="0 0 80 80"><rect width="80" height="80" rx="18" fill="#fff"/><path d="M39.500 14Q52 26 52 39 52 51 40.500 61V67H38.500V61Q27 51 27 39 27 26 39.500 14Z" fill="#0a5c41"/><path d="M39.500 32 41 60H38Z" fill="#b9c9c1"/></svg></div>
  <div class="sep"></div>
  <div class="app open"><svg viewBox="0 0 80 80"><defs><linearGradient id="sg" x2="0" y2="1"><stop stop-color="#cfdde4"/><stop offset="1" stop-color="#86827f"/></linearGradient></defs><rect width="80" height="80" rx="18" fill="url(#sg)"/><circle cx="40" cy="40" r="34.500" fill="#2b3030"/><circle cx="40" cy="40" r="33.500" fill="none" stroke="#a9adae" stroke-width="1"/><circle cx="40" cy="40" r="28.500" fill="none" stroke="#a9b1b2" stroke-width="4" stroke-dasharray="1.500 1.500"/><circle cx="40" cy="40" r="25.500" fill="#414646" stroke="#aab4b5" stroke-width="2.500"/><circle cx="40" cy="40" r="15.500" fill="#303535" stroke="#7d8585" stroke-width="3" stroke-dasharray="1.200 .8"/><circle cx="40" cy="40" r="12" fill="#4c5252" stroke="#7d8585" stroke-width="1.500"/><path d="M40 40H65M40 40 27 18M40 40 27 62" stroke="#b2bbbc" stroke-width="2.500"/><circle cx="40" cy="40" r="3" fill="#b2bbbc"/><circle cx="40" cy="40" r="1.200" fill="#444"/></svg></div>
  <div class="app"><svg viewBox="0 0 80 80"><defs><linearGradient id="mg" x2="0" y2="1"><stop stop-color="#265fea"/><stop offset="1" stop-color="#02baf9"/></linearGradient><linearGradient id="me" x2="0" y2="1"><stop stop-color="#f7f7f7"/><stop offset="1" stop-color="#d5d8db"/></linearGradient></defs><rect width="80" height="80" rx="18" fill="url(#mg)"/><rect x="12.500" y="22.500" width="55" height="35" rx="3.500" fill="url(#me)"/><path d="m14 56 15-15M66 56 51 41M14 24l20.500 20.500q5.500 5.500 11 0L66 24" fill="none" stroke="#8f999e" stroke-width="1.500"/></svg></div>
  <div class="app"><svg viewBox="0 0 80 80"><rect width="80" height="80" rx="18" fill="#fcfcfc"/><path d="M0 20.500H80M0 30.500H80M0 40.500H80M0 50.500H80M0 60.500H80M5 70.500H75" stroke="#b5b5b5" stroke-width=".9"/><path d="M13.500 1V79" stroke="#f1a8a8" stroke-width="1"/><path d="M67-4 75 0 56 39 41 67 31 83 36 63 50 34Z" fill="#a6c1d6"/><path d="M74.500 0 56 38" stroke="#7a6a58" stroke-width="1.800"/><path d="M50 35 57 39 46 60 39 57Z" fill="#9aa6b2"/><path d="M39 58 46 61 31 83Z" fill="#68707a"/><path d="M67-4 52 29" stroke="#7fa8cc" stroke-width="3.500"/><path d="M71-8 76-6 74-1 69-3Z" fill="#b5cbe0"/><path d="M38 64 33 78" stroke="#eef" stroke-width="1.500"/></svg></div>
  <div class="sep late"></div>
  <div class="app"><svg viewBox="0 0 80 80"><path d="M14-7H45L62 8H14Z" fill="#e3e3e3"/><path d="M14-2H47V10H14Z" fill="#f2f2f2"/><path d="M18-4.500H38" stroke="#aaa"/><path d="M0 7.500H82V80H0Z" fill="#fff"/><rect x="4" y="11.500" width="74" height="64.500" fill="none" stroke="#c8c8cc" stroke-width="1.500"/><text x="10.500" y="73" class="dee" textLength="65" lengthAdjust="spacingAndGlyphs">D</text><g class="deal"><text x="43.500" y="38">DEAL</text><text x="43.500" y="46.500">4</text><text x="44" y="54.800">PROP</text></g></svg></div>
  <div class="app"><svg viewBox="0 0 80 80"><defs><linearGradient id="tg"><stop stop-color="#5c6163"/><stop offset=".5" stop-color="#86898a"/><stop offset="1" stop-color="#5a5f61"/></linearGradient></defs><path d="M6 5Q39 20 74 5L67 72Q65 82 40 82T14 72Z" fill="url(#tg)"/><path d="M14 70Q16 82 40 82T67 70Q60 78 40 78T14 70Z" fill="#8b8f90"/><path d="M6 4 14-5 26-7 38-1 46-6 60-4 74 3 70 9 52 13 28 14 12 10Z" fill="#cfcfcf"/><path d="M10 4 20 0 18 8ZM34-4 44 2 36 8ZM58-2 68 4 60 8ZM22-3 30-5 28 2Z" fill="#42454a"/><path d="M28 2 38 1 36 5Z" fill="#20b7c8"/><path d="M48-2 55 6 47 10Z" fill="#b8492b"/><path d="M46-6 52-2 46 5ZM54 6 60 9 52 12Z" fill="#2a4f9e"/><path d="M12 4 24-3M38 12 44 0M20 11 30 4M62-3 56 10" stroke="#fff" stroke-width="1.500"/><path d="M6 5Q8 14 39 15.500T74 5" fill="none" stroke="#8d9193" stroke-width="1.300"/></svg></div>
</div>
<div class="corner"></div>
</body>
</html>
```
FILE: styles.css
```css
* { box-sizing: border-box; }
body {
  margin: 0;
  width: 1920px;
  height: 1080px;
  overflow: hidden;
  position: relative;
  background: linear-gradient(#000 960px, #03040c 1030px, #04050e);
  font-family: Inter, "Liberation Sans", sans-serif;
  color: #e6eaec;
}
svg { display: block; flex: none; }
.defs { position: absolute; }

/* menu bar */
.menubar {
  height: 24px;
  display: flex;
  align-items: center;
  padding: 0 17px 1px 19px;
  background: linear-gradient(90deg, #022466, #03246a 30%, #0b276f 55%, #29307a 85%, #2b2f79);
  font-size: 13px;
}
.apple { width: 15px; height: 16px; margin-right: 19px; }
.menus { display: grid; grid-template-columns: 71px 42px 44px 50px 64px 88px 66px 42px 69px 40px; letter-spacing: -.15px; font-weight: 500; }
.menus b { letter-spacing: -.1px; font-weight: 700; }
.status { margin-left: auto; display: flex; align-items: center; font-weight: 500; }
.status svg:nth-of-type(1) { margin-right: 21px; }
.status svg:nth-of-type(2) { margin-right: 18px; }
.status svg:nth-of-type(3) { margin-right: 18px; }
.status svg:nth-of-type(4) { margin-right: 16px; }
.date { width: 75px; }
.time { width: 60px; white-space: nowrap; letter-spacing: .1px; }

/* browser window */
.window {
  margin-top: 1px;
  height: 935px;
  border: 1px solid #4b5157;
  border-radius: 10px;
  overflow: hidden;
  background: #10181e;
}
.tabstrip { height: 41px; display: flex; align-items: center; background: #292f38; padding-left: 20px; padding-top: 7px; }
.lights { display: flex; gap: 8px; width: 72px; margin-top: -8px; }
.lights i { width: 12px; height: 12px; border-radius: 50%; }
.red { background: #ff5b54; }
.amber { background: #ffb636; }
.green { background: #05c43c; }
.tab {
  width: 234px; height: 34px;
  display: flex; align-items: center;
  padding: 0 0 1px 11px;
  background: #414c5d;
  border-radius: 8px 8px 0 0;
}
.tabtitle { margin-left: 8px; font-size: 12.500px; letter-spacing: -.25px; color: #fff; }
.badge { font: 700 10.500px Inter, sans-serif; fill: #fff; }
.close { margin-left: auto; margin-right: 6px; }
.tabcover { width: 235px; height: 25px; background: #fff; margin-bottom: 2px; }
.tabsep { width: 1px; height: 20px; margin: 0 16px 0 9px; background: #4c525c; }
.chev { margin-left: auto; margin-right: 15px; }
.toolbar { height: 35px; display: flex; align-items: center; background: #414c5d; padding: 0 19px 0 14px; }
.toolbar > svg { margin-right: 18px; }
.toolbar > svg:nth-of-type(3) { margin-right: 14px; }
.omnibox { width: 1672px; height: 28px; border-radius: 14px; background: #343c47; display: flex; align-items: center; padding: 0 10px 0 13px; }
.url { margin-left: 12px; font-size: 14px; letter-spacing: -.05px; color: #fff; }
.pageicons { margin-left: auto; display: flex; align-items: center; gap: 17px; }
.pageicons svg:nth-child(3) { margin: 0 2px 0 1px; }
.actions { margin-left: auto; display: flex; align-items: center; gap: 17px; }
.actions svg:nth-child(3) { margin: 0 2px 0 -3px; }
.bookmarks { height: 34px; display: flex; align-items: center; background: #414c5d; border-bottom: 1px solid #5f6b76; padding-left: 14px; }
.bookcover { width: 1696px; height: 34px; background: #fff; margin-left: -3px; position: relative; margin-top: -1px; }

/* app */
.page { display: flex; padding: 17px 0 0 155px; }
.sidebar { width: 483px; }
.cover { height: 785px; background: #fff; }
.peek { height: 3px; overflow: hidden; display: flex; align-items: flex-end; padding: 0 21px 0 17px; font-size: 16.500px; line-height: 20px; }
.avatar { width: 48px; height: 24px; background: linear-gradient(90deg, #a08a78, #8f9ab0 25%, #5d5a78 50%, #a8b0c8 75%, #3660b0); margin-right: 16px; }
.num { letter-spacing: -.35px; margin-bottom: -4px; white-space: nowrap; }
.day { margin-left: auto; font-size: 12px; color: #8a969d; margin-bottom: -4px; }
.chat { width: 1121px; padding-top: 2px; }
.chathead { height: 59px; background: #fff; border-right: 2px solid #1f282f; border-bottom: 5px solid #1f282f; }
.thread { height: 663px; background: #0d1319; border-left: 2px solid #1c252b; position: relative; overflow: hidden; }
.wall { position: absolute; inset: 0; }
.leftblank { position: absolute; left: 82px; top: 177px; width: 54px; height: 124px; background: #fff; }
.scroll { position: absolute; right: 0; top: 0; width: 6px; height: 123px; background: #373b3f; }
.flow { position: relative; display: flex; flex-direction: column; align-items: center; padding-top: 27px; }
.chip { height: 32px; border-radius: 7.500px; background: #161d24; color: #81898f; font-size: 12.500px; line-height: 32px; text-align: center; }
.notice { width: 481px; letter-spacing: -.1px; margin-right: 6px; }
.first, .second { width: 93px; letter-spacing: -.1px; }
.first { margin: 18px 6px 12px 0; }
.second { margin: 12px 6px 12px 0; }
.row { align-self: stretch; display: flex; justify-content: flex-end; align-items: center; padding-right: 69px; margin-bottom: 2px; }
.row:has(+ .chip) { margin-bottom: 0; }
.react { margin-right: 6px; }
.bubble {
  position: relative;
  padding: 6px 7px 8px 9px;
  border-radius: 7.500px;
  background: #015344;
  font-size: 14.200px;
  font-weight: 450;
  letter-spacing: -.25px;
  line-height: 19px;
  white-space: nowrap;
}
.tail .bubble { border-top-right-radius: 0; }
.tail .bubble::after { content: ""; position: absolute; top: 0; right: -7px; width: 8px; height: 12px; background: #015344; clip-path: polygon(0 0, 100% 0, 100% 1px, 1px 100%, 0 100%); }
.w1 { width: 642px; }
.w2 { width: 551px; }
.w3 { width: 455px; }
.w4 { width: 418px; }
.meta { position: absolute; right: 6px; bottom: 2px; display: flex; align-items: center; gap: 4px; font-size: 11.500px; font-weight: 400; letter-spacing: -.1px; line-height: 15px; color: #97bab2; }
.more { position: absolute; right: 9px; top: 12px; }
.jump { position: absolute; right: 11px; top: 604px; width: 42px; height: 42px; border-radius: 50%; background: #1f282f; display: grid; place-items: center; }
.composer { height: 64px; background: #1f282f; display: flex; align-items: center; padding: 0 27px 0 29px; }
.attach { margin: 2px 19px 0 0; }
.input { width: 991px; height: 44px; border-radius: 8px; background: #26323a; display: flex; align-items: center; justify-content: space-between; padding: 0 13px 1px 17px; margin-right: 19px; font-size: 15px; letter-spacing: -.25px; color: #84919a; }

/* dock */
.dock {
  width: 1219px; height: 113px;
  margin: 2px auto 0;
  display: flex; align-items: flex-start; gap: 22px;
  padding: 13px 0 0 12px;
  border: 1px solid #3d3d44;
  border-radius: 33px;
  background: linear-gradient(90deg, #12151e, #17161f 20%, #1b171b 48%, #17161f 60%, #18161f);
}
.app { width: 80px; height: 97px; flex: none; }
.app svg { width: 80px; height: 80px; overflow: visible; }
.open::after { content: ""; display: block; width: 4px; height: 4px; border-radius: 50%; background: #9d9da2; margin: 13px auto 0; }
.sep { width: 1px; height: 83px; margin: 0 11px 0 12px; background: #4a4a51; flex: none; }
.sep.late { margin-right: 11px; }
.dee { font: 86px "Liberation Serif", serif; fill: #000; stroke: #000; stroke-width: 1px; }
.deal { font: 7.500px "Liberation Sans", sans-serif; fill: #111; text-anchor: middle; }
.corner { position: absolute; right: 0; top: 954px; width: 166px; height: 112px; background: #fff; box-shadow: 0 0 0 2px #000; }
```
